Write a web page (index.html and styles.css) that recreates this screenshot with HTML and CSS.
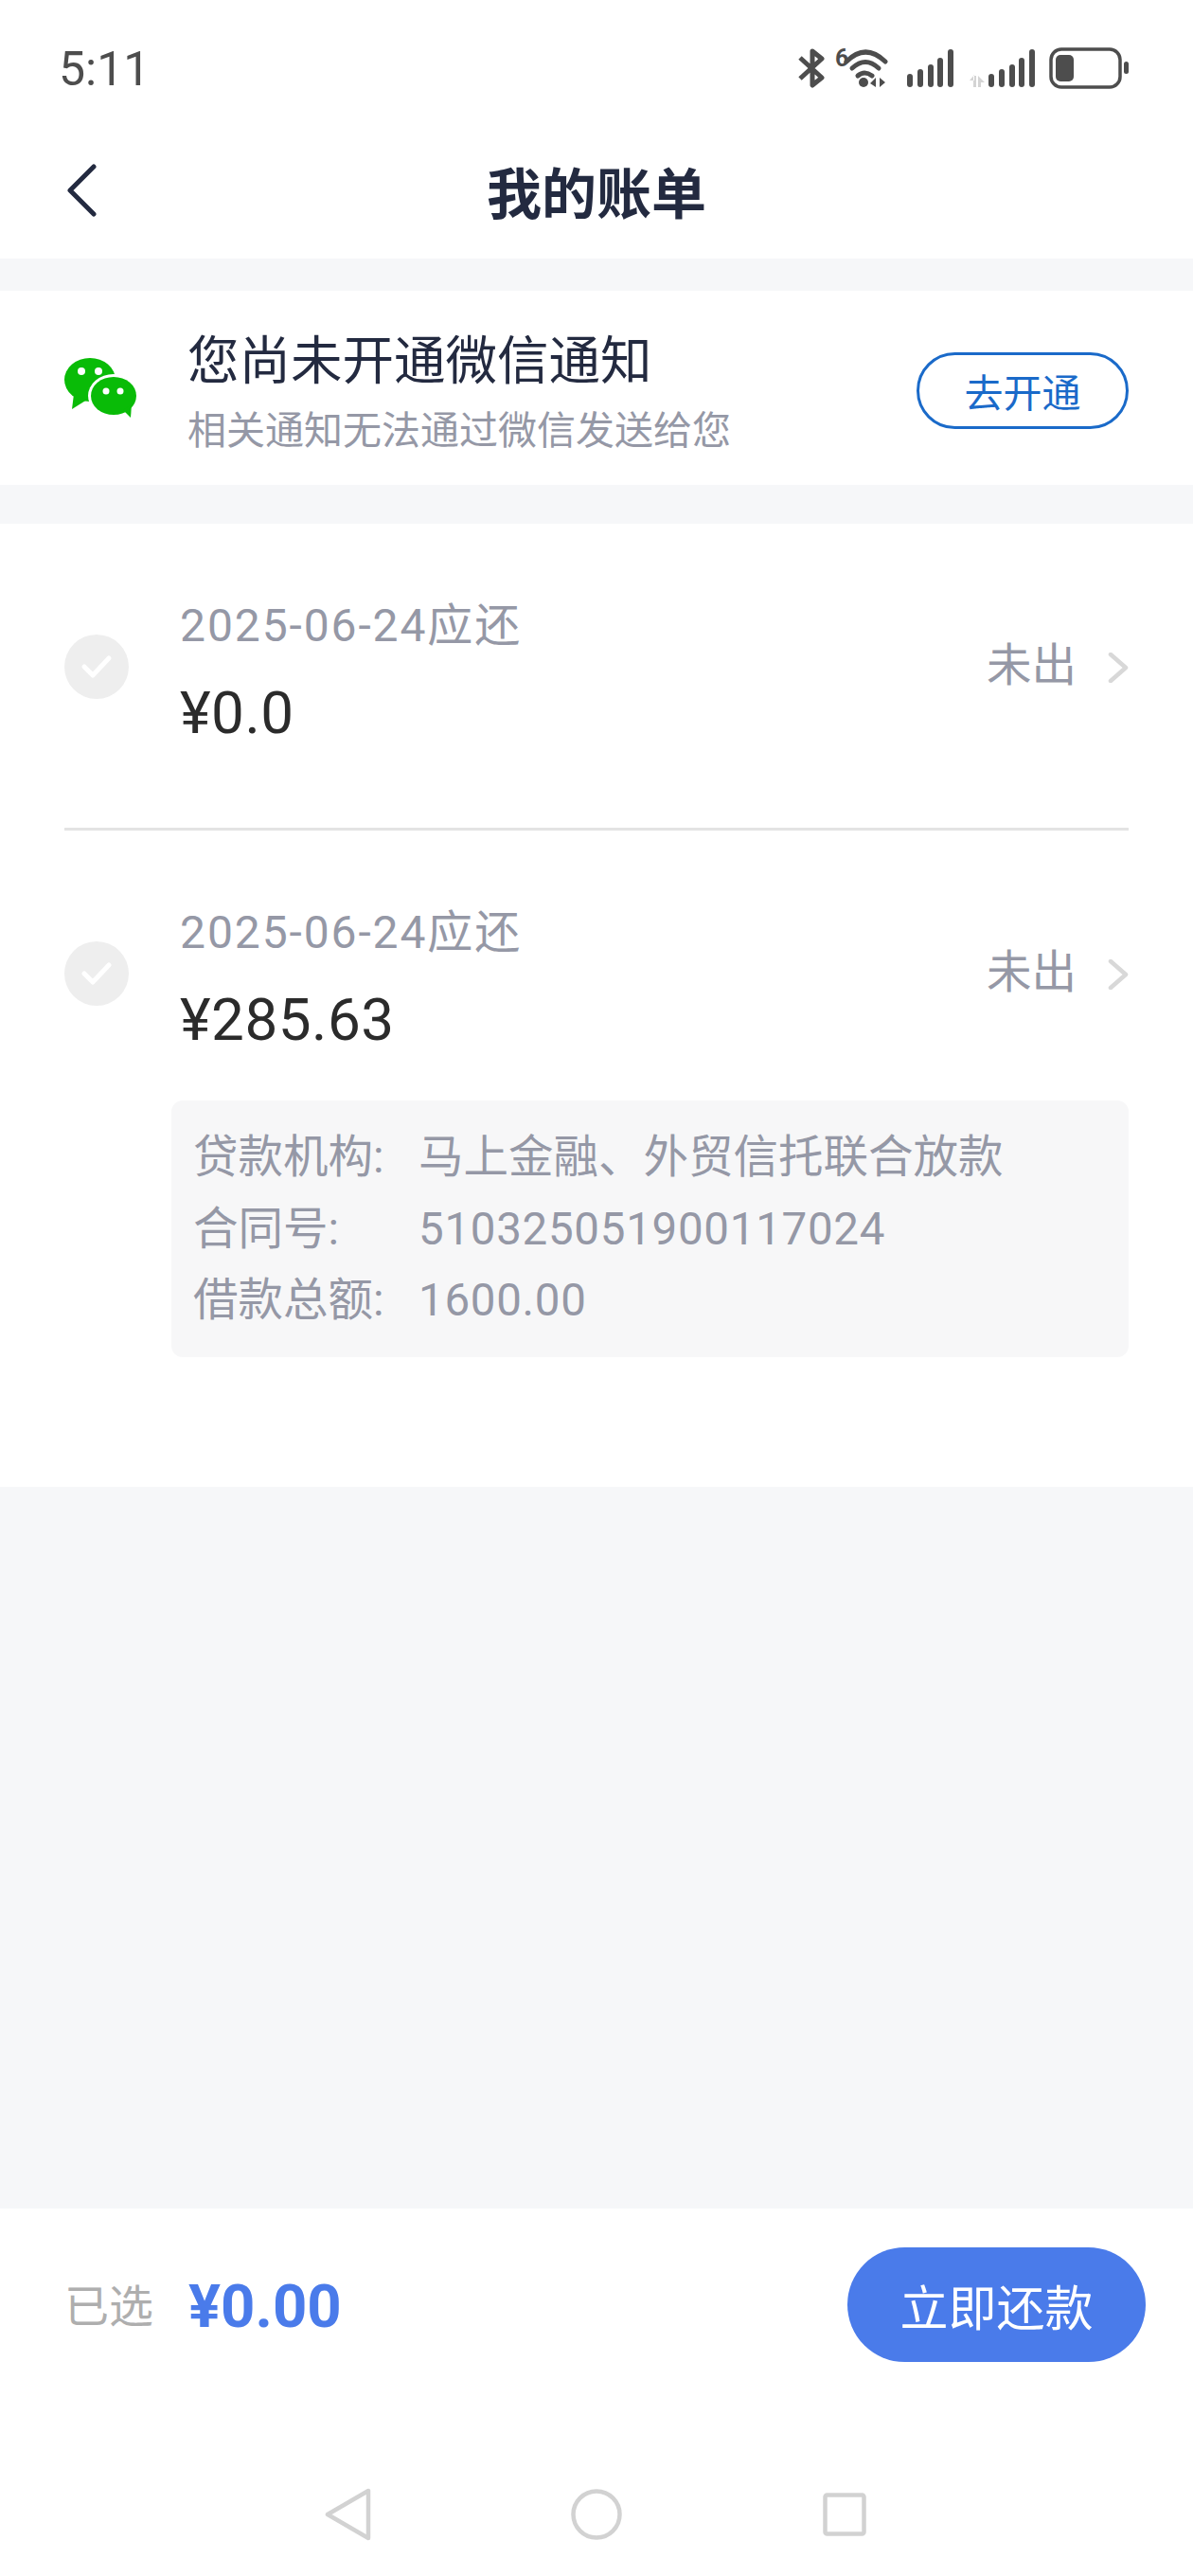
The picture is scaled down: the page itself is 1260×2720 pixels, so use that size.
FILE: index.html
```html
<!DOCTYPE html>
<html lang="zh-CN">
<head>
    <meta charset="UTF-8">
    <meta name="viewport" content="width=device-width, initial-scale=1.0">
    <title>我的账单</title>
    <link rel="stylesheet" href="styles.css">
</head>
<body>
    <div class="page">
        <div class="header">
            <div class="status-bar">
                <span class="time">5:11</span>
                <div class="status-icons">
                    <svg class="icon-bt" width="28" height="42" viewBox="0 0 28 42" fill="none" stroke="#4d4d4d" stroke-width="5">
                        <path d="M2 10 L25 31 L15 39 L15 3 L25 11 L2 32" stroke-linejoin="round"/>
                    </svg>
                    <svg class="icon-wifi" width="56" height="52" viewBox="0 -5 56 52">
                        <text x="0" y="19" class="wifi-six">6</text>
                        <g fill="none" stroke="#4d4d4d" stroke-width="5" stroke-linecap="round">
                            <path d="M12 14 Q32 -6 53 14"/>
                            <path d="M18 21 Q32 8 46 21"/>
                            <path d="M24 29 Q31 23 39 29"/>
                        </g>
                        <circle cx="30" cy="36" r="5" fill="#4d4d4d"/>
                        <path d="M43 31 L43 41 L37 37 Z M47 31 L47 41 L53 36 Z" fill="#4d4d4d"/>
                    </svg>
                    <svg class="icon-signal" width="49" height="42" viewBox="0 0 49 42" fill="#4d4d4d">
                        <rect x="0" y="27" width="6" height="14" rx="3"/>
                        <rect x="11" y="22" width="6" height="19" rx="3"/>
                        <rect x="22" y="17" width="6" height="24" rx="3"/>
                        <rect x="32" y="10" width="6" height="31" rx="3"/>
                        <rect x="43" y="1" width="6" height="40" rx="3"/>
                    </svg>
                    <svg class="icon-signal2" width="70" height="42" viewBox="0 0 70 42">
                        <path d="M5 29 L5 41 L8 41 L8 29 Z M1 34 L6 28 L6 34 Z M10 29 L10 41 L13 41 L13 36 L17 36 Z" fill="#d4d4d4"/>
                        <g fill="#4d4d4d">
                            <rect x="21" y="27" width="6" height="14" rx="3"/>
                            <rect x="32" y="22" width="6" height="19" rx="3"/>
                            <rect x="43" y="17" width="6" height="24" rx="3"/>
                            <rect x="53" y="10" width="6" height="31" rx="3"/>
                            <rect x="64" y="1" width="6" height="40" rx="3"/>
                        </g>
                    </svg>
                    <svg class="icon-battery" width="84" height="44" viewBox="0 0 84 44">
                        <rect x="2" y="2" width="73" height="40" rx="11" fill="none" stroke="#4d4d4d" stroke-width="3.5"/>
                        <rect x="7" y="8" width="19" height="28" rx="5" fill="#4d4d4d"/>
                        <rect x="79" y="15" width="5" height="13" rx="2.5" fill="#4d4d4d"/>
                    </svg>
                </div>
            </div>
            <div class="nav-bar">
                <svg class="back" width="32" height="56" viewBox="0 0 32 56" fill="none" stroke="#232a40" stroke-width="5" stroke-linecap="round" stroke-linejoin="round">
                    <path d="M29 3 L4 28 L29 53"/>
                </svg>
                <h1>我的账单</h1>
            </div>
        </div>

        <div class="notice">
            <svg class="wechat" width="78" height="64" viewBox="0 0 78 64">
                <ellipse cx="27" cy="23" rx="27" ry="23" fill="#09bb07"/>
                <path d="M10 38 L8 54 L24 44 Z" fill="#09bb07"/>
                <ellipse cx="52" cy="40" rx="27" ry="23" fill="#fff"/>
                <ellipse cx="52" cy="40" rx="24" ry="20" fill="#09bb07"/>
                <path d="M62 55 L70 63 L71 49 Z" fill="#09bb07"/>
                <circle cx="18" cy="14" r="4" fill="#fff"/>
                <circle cx="36" cy="14" r="4" fill="#fff"/>
                <circle cx="44" cy="35" r="3.5" fill="#fff"/>
                <circle cx="59" cy="35" r="3.5" fill="#fff"/>
            </svg>
            <div class="notice-text">
                <div class="notice-title">您尚未开通微信通知</div>
                <div class="notice-sub">相关通知无法通过微信发送给您</div>
            </div>
            <button class="open-btn">去开通</button>
        </div>

        <div class="bills">
            <div class="bill bill-first">
                <div class="bill-head">
                    <span class="check">
                        <svg width="34" height="26" viewBox="0 0 34 26" fill="none" stroke="#fff" stroke-width="5" stroke-linecap="round" stroke-linejoin="round">
                            <path d="M4 13 L13 22 L30 4"/>
                        </svg>
                    </span>
                    <div class="bill-main">
                        <div class="bill-date">2025-06-24应还</div>
                        <div class="bill-amount">¥0.0</div>
                    </div>
                    <div class="bill-status">
                        <span>未出</span>
                        <svg width="22" height="32" viewBox="0 0 22 32" fill="none" stroke="#d8d8d8" stroke-width="4.5" stroke-linecap="round" stroke-linejoin="round">
                            <path d="M3 2 L19 16 L3 30"/>
                        </svg>
                    </div>
                </div>
            </div>

            <div class="bill">
                <div class="bill-head">
                    <span class="check">
                        <svg width="34" height="26" viewBox="0 0 34 26" fill="none" stroke="#fff" stroke-width="5" stroke-linecap="round" stroke-linejoin="round">
                            <path d="M4 13 L13 22 L30 4"/>
                        </svg>
                    </span>
                    <div class="bill-main">
                        <div class="bill-date">2025-06-24应还</div>
                        <div class="bill-amount">¥285.63</div>
                    </div>
                    <div class="bill-status">
                        <span>未出</span>
                        <svg width="22" height="32" viewBox="0 0 22 32" fill="none" stroke="#d8d8d8" stroke-width="4.5" stroke-linecap="round" stroke-linejoin="round">
                            <path d="M3 2 L19 16 L3 30"/>
                        </svg>
                    </div>
                </div>
                <div class="bill-detail">
                    <div class="detail-row"><span class="detail-label">贷款机构:</span><span>马上金融、外贸信托联合放款</span></div>
                    <div class="detail-row"><span class="detail-label">合同号:</span><span class="detail-num">510325051900117024</span></div>
                    <div class="detail-row"><span class="detail-label">借款总额:</span><span class="detail-num">1600.00</span></div>
                </div>
            </div>
        </div>

        <div class="spacer"></div>

        <div class="footer">
            <div class="pay-bar">
                <span class="selected-label">已选</span>
                <span class="selected-amount">¥0.00</span>
                <button class="pay-btn">立即还款</button>
            </div>
            <div class="sys-nav">
                <svg width="50" height="56" viewBox="0 0 50 56" fill="none" stroke="#d2d2d2" stroke-width="4.5" stroke-linejoin="round">
                    <path d="M46 3 L46 53 L3 28 Z"/>
                </svg>
                <svg width="54" height="54" viewBox="0 0 54 54" fill="none" stroke="#d2d2d2" stroke-width="4.5">
                    <circle cx="27" cy="27" r="24.5"/>
                </svg>
                <svg width="46" height="46" viewBox="0 0 46 46" fill="none" stroke="#d2d2d2" stroke-width="4.5" stroke-linejoin="round">
                    <rect x="2.5" y="2.5" width="41" height="41" rx="2"/>
                </svg>
            </div>
        </div>
    </div>
</body>
</html>
```

FILE: styles.css
```css
* {
    margin: 0;
    padding: 0;
    box-sizing: border-box;
    font-family: Roboto, 'Noto Sans CJK SC', sans-serif;
}

body {
    background-color: #f6f7f9;
}

.page {
    width: 1260px;
    height: 2720px;
    display: flex;
    flex-direction: column;
}

.header {
    background: #fff;
    height: 273px;
}

.status-bar {
    height: 144px;
    padding: 0 68px 0 62px;
    display: flex;
    align-items: center;
    justify-content: space-between;
}

.time {
    padding-top: 2px;
    font-size: 50px;
    color: #4d4d4d;
}

.status-icons {
    display: flex;
    align-items: center;
}

.icon-wifi {
    margin-left: 11px;
}

.icon-signal {
    margin-left: 20px;
}

.icon-signal2 {
    margin-left: 16px;
}

.icon-battery {
    margin-left: 15px;
}

.wifi-six {
    font-size: 25px;
    font-weight: 700;
    fill: #4d4d4d;
}

.nav-bar {
    height: 113px;
    padding-left: 70px;
    display: flex;
    align-items: center;
}

.nav-bar h1 {
    flex: 1;
    margin-left: -102px;
    text-align: center;
    font-size: 58px;
    font-weight: 700;
    color: #232a40;
}

.notice {
    margin-top: 34px;
    height: 205px;
    padding: 0 68px;
    background: #fff;
    display: flex;
    align-items: center;
}

.wechat {
    margin-right: 52px;
    flex-shrink: 0;
}

.notice-text {
    flex: 1;
    padding-top: 10px;
}

.notice-title {
    font-size: 54.5px;
    line-height: 72px;
    color: #232a40;
}

.notice-sub {
    margin-top: 8px;
    font-size: 41px;
    line-height: 60px;
    color: #9598a6;
}

.open-btn {
    width: 224px;
    height: 81px;
    margin-top: 5px;
    background: #fff;
    border: 3px solid #1a6ac9;
    border-radius: 41px;
    font-size: 41px;
    color: #1a6ac9;
}

.bills {
    margin-top: 41px;
    height: 1017px;
    padding: 0 68px;
    background: #fff;
}

.bill {
    padding-top: 78px;
}

.bill-first {
    padding-bottom: 81px;
    border-bottom: 3px solid #e3e3e3;
}

.bill-head {
    display: flex;
    align-items: flex-start;
}

.check {
    width: 68px;
    height: 68px;
    margin-top: 39px;
    margin-right: 54px;
    border-radius: 50%;
    background: #eee;
    display: flex;
    align-items: center;
    justify-content: center;
}

.bill-main {
    flex: 1;
}

.bill-date {
    font-size: 48px;
    line-height: 60px;
    letter-spacing: 1.9px;
    color: #9598a6;
}

.bill-amount {
    margin-top: 22px;
    font-size: 62px;
    line-height: 80px;
    letter-spacing: 0.5px;
    color: #2b2b2b;
}

.bill-status {
    margin-top: 37px;
    height: 60px;
    display: flex;
    align-items: center;
    gap: 33px;
    font-size: 47.5px;
    color: #9598a6;
}

.bill-status svg {
    margin-top: 13px;
}

.bill-detail {
    margin: 45px 0 0 113px;
    height: 271px;
    padding: 23px 23px;
    background: #f7f7f8;
    border-radius: 12px;
}

.detail-row {
    display: flex;
    font-size: 47.5px;
    line-height: 75.5px;
    color: #9598a6;
}

.detail-label {
    width: 238px;
}

.detail-num {
    letter-spacing: 0.7px;
}

.spacer {
    flex: 1;
}

.footer {
    background: #fff;
    height: 388px;
}

.pay-bar {
    height: 223px;
    padding: 41px 50px 0 68px;
    display: flex;
    align-items: flex-start;
}

.selected-label {
    margin-top: 30px;
    font-size: 47px;
    line-height: 66px;
    color: #aeaeae;
}

.selected-amount {
    flex: 1;
    margin: 23px 0 0 37px;
    font-size: 63.5px;
    line-height: 80px;
    font-weight: 700;
    color: #4a7bea;
}

.pay-btn {
    width: 315px;
    height: 121px;
    border: none;
    border-radius: 61px;
    background: #4a7bea;
    color: #fff;
    font-size: 51px;
}

.sys-nav {
    padding: 72px 0 0 343px;
    display: flex;
    align-items: center;
}

.sys-nav svg:nth-child(2) {
    margin-left: 210px;
}

.sys-nav svg:nth-child(3) {
    margin-left: 212px;
}
```
